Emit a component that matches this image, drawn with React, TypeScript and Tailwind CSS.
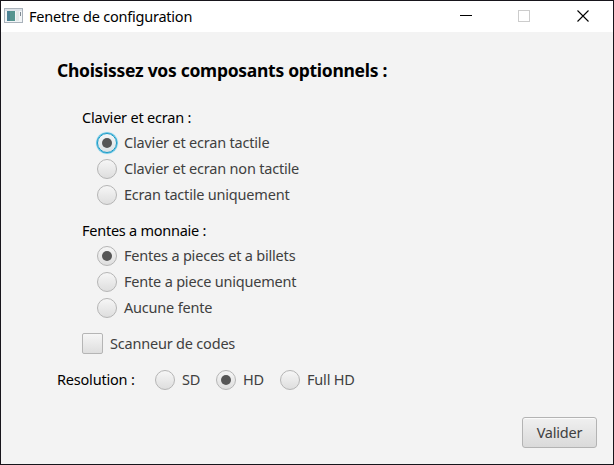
import React from "react";

function Radio({ label, checked, focused, className = "" }: { label: string; checked?: boolean; focused?: boolean; className?: string }) {
  return (
    <label className={`flex h-5 items-center gap-[7px] text-[#404040] ${className}`}>
      <span
        className={`flex size-5 shrink-0 items-center justify-center rounded-full border bg-linear-to-b ${
          focused
            ? "border-[#1598c4] from-[#f4f6f7] to-[#dce2e5] shadow-[0_0_0_0.6px_#39b3dc,0_0_1px_1px_#a9dcee]"
            : "border-[#b5b5b5] from-[#f6f6f6] to-[#dedede]"
        }`}
      >
        {checked && <span className="size-[10px] rounded-full bg-[#565656]" />}
      </span>
      <span className="whitespace-nowrap pb-0.5">{label}</span>
    </label>
  );
}

function TitleBar() {
  return (
    <header className="flex h-[31px] shrink-0 items-center bg-white pb-px pl-[3px] text-black">
      <svg width="19" height="16" viewBox="0 0 19 16" className="shrink-0">
        <rect x="0.5" y="0.5" width="18" height="14" fill="#f2f5f7" stroke="#a9b2bb" />
        <rect x="1" y="1" width="17" height="2" fill="#dce2e8" />
        <rect x="3" y="3" width="8" height="10" fill="#55958f" />
        <rect x="3" y="3" width="3" height="10" fill="#4b8294" />
        <rect x="12" y="3" width="3" height="10" fill="#e3e9e8" />
        <rect x="16" y="4" width="1" height="4" fill="#7e8992" />
      </svg>
      <h1 className="ml-1.5 whitespace-nowrap pb-px text-[14.5px] tracking-[-0.22px]">Fenetre de configuration</h1>
      <div className="ml-auto flex items-center pr-[23px]">
        <svg width="130" height="12" viewBox="0 0 130 12" shapeRendering="crispEdges">
          <rect x="0" y="5" width="12" height="1" fill="#000" />
          <rect x="58.5" y="0.5" width="11" height="11" fill="none" stroke="#ccc" />
          <path d="M117.5 0.5L128.5 11.5M128.5 0.5L117.5 11.5" stroke="#000" strokeWidth="1.1" shapeRendering="auto" />
        </svg>
      </div>
    </header>
  );
}

export default function App() {
  return (
    <div className="flex h-[465px] w-[614px] flex-col overflow-hidden border border-[#17151b] bg-[#f3f3f3] font-['Noto_Sans','Open_Sans',sans-serif] text-[14.5px] leading-5 tracking-[-0.2px] text-black">
      <TitleBar />
      <main className="flex flex-1 flex-col pl-14 pr-4">
        <h2 className="mt-7 whitespace-nowrap text-[17.5px] font-bold leading-5 tracking-[-0.29px]">
          Choisissez vos composants optionnels :
        </h2>
        <div className="mt-[27px] flex flex-col pl-[25px]">
          <p>Clavier et ecran :</p>
          <div className="mt-1.5 flex flex-col gap-1.5 pl-[15px]">
            <Radio label="Clavier et ecran tactile" checked focused />
            <Radio label="Clavier et ecran non tactile" />
            <Radio label="Ecran tactile uniquement" />
          </div>
          <p className="mt-[15px] tracking-[-0.25px]">Fentes a monnaie :</p>
          <div className="mt-1.5 flex flex-col gap-1.5 pl-[15px]">
            <Radio label="Fentes a pieces et a billets" checked />
            <Radio label="Fente a piece uniquement" />
            <Radio label="Aucune fente" />
          </div>
          <label className="mt-[15px] flex h-[21px] items-center gap-[7px] text-[#404040]">
            <span className="size-[21px] rounded-[2px] border border-[#b5b5b5] bg-linear-to-b from-[#f6f6f6] to-[#dedede]" />
            <span className="pb-0.5">Scanneur de codes</span>
          </label>
        </div>
        <div className="mt-4 flex h-5 items-center">
          <p className="w-[98px] pb-0.5">Resolution :</p>
          <Radio label="SD" className="w-[61px]" />
          <Radio label="HD" checked className="w-16" />
          <Radio label="Full HD" />
        </div>
        <button className="mt-[27px] h-[31px] w-[75px] self-end rounded-[3px] border border-[#b3b3b3] bg-linear-to-b from-[#f0f0f0] to-[#dadada] pb-0.5 text-[#404040] shadow-[inset_0_1px_0_#fafafa]">
          Valider
        </button>
      </main>
    </div>
  );
}
